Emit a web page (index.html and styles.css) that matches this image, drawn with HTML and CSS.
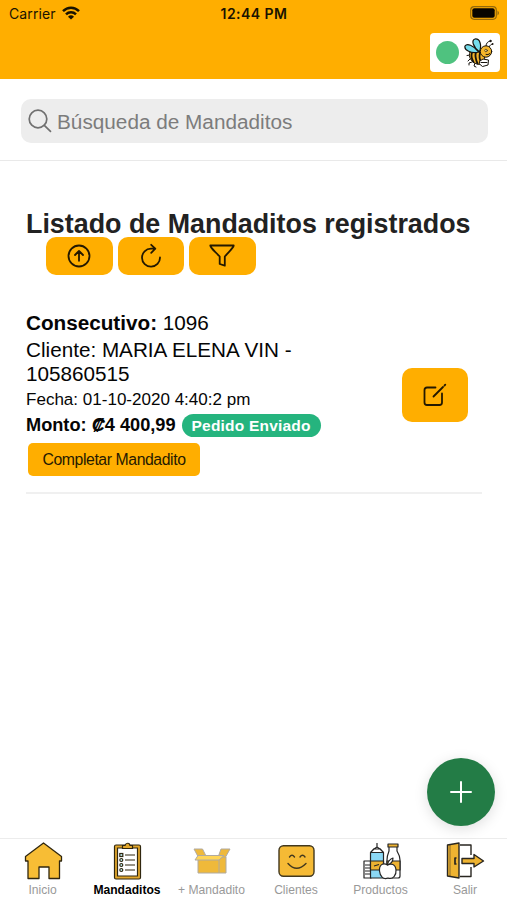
FILE: index.html
```html
<!DOCTYPE html>
<html lang="es">
<head>
<meta charset="utf-8">
<meta name="viewport" content="width=device-width, initial-scale=1">
<title>Mandaditos</title>
<link rel="stylesheet" href="styles.css">
</head>
<body>
<div class="app">
  <header class="header">
    <div class="status">
      <div class="carrier"><span>Carrier</span>
        <svg width="18" height="14" viewBox="0 0 18 14" fill="none" stroke="#1a1300" stroke-width="2.5"><path d="M1 5.2C5.600 .6 12.400 .6 17 5.200M4 8.400C6.800 5.600 11.200 5.600 14 8.400"/><path d="M6 10.700Q9 8 12 10.700L9 13.600Z" fill="#1a1300" stroke="none"/></svg>
      </div>
      <div class="clock">12:44 PM</div>
      <svg class="battery" width="30" height="14" viewBox="0 0 30 14"><rect x=".7" y=".7" width="25.600" height="12.600" rx="3.500" fill="none" stroke="#94690a" stroke-width="1.200"/><rect x="2.300" y="2.300" width="22.400" height="9.400" rx="2" fill="#080500"/><path d="M27.500 4.500Q30.500 7 27.500 9.500Z" fill="#94690a"/></svg>
    </div>
    <div class="toolbar">
      <div class="presence"><span class="dot"></span>
        <svg width="30" height="30" viewBox="0 0 30 30" stroke="#17130d" stroke-width="1" stroke-linecap="round">
          <path d="M6 17L3 17.500M6 21L4 23M8 24L5 25V27M11 25L10 28L12 29M22 8C22 5 24 3.500 26 3M25 9C26 7 27.500 6 28.500 6" fill="none"/>
          <path d="M6 14C4 19 7 24 13 26C19 28 22 22 20 16C17 12 11 11 6 14Z" fill="#f5b62b"/>
          <path d="M8 14.500Q6.500 19 9.500 24M12 14Q10.500 19 13.500 25.500M16 15Q14.500 20 17.500 25" fill="none" stroke-width="1.800"/>
          <path d="M15 14C7 16 0 12 1 8C3 5 9 7 15 14Z" fill="#75ddec" stroke-width="1.200"/>
          <path d="M15.500 14C9 9 7 2 11 1C16 .5 18 7 15.500 14Z" fill="#75ddec" stroke-width="1.200"/>
          <circle cx="22" cy="13.500" r="5.700" fill="#f5b62b"/>
          <circle cx="22" cy="12.500" r="1.300" fill="#fbdb80" stroke-width=".6"/><path d="M22 16.500Q24 17.500 26 15.500" fill="none"/>
          <path d="M16 23L19 21L24.500 22L24 27L18.500 28.500L15.500 26ZM17 24.500H23" fill="#fff"/>
          <circle cx="26.500" cy="3" r=".7"/><circle cx="28.500" cy="6" r=".4"/>
        </svg>
      </div>
    </div>
  </header>

  <div class="search-row">
    <div class="search">
      <svg width="24" height="24" viewBox="0 0 24 24" fill="none" stroke="#707070" stroke-width="1.700" stroke-linecap="round"><circle cx="10" cy="10" r="8.800"/><path d="M16.300 16.300L22.500 22.300"/></svg>
      <span>Búsqueda de Mandaditos</span>
    </div>
  </div>

  <main class="content">
    <h1>Listado de Mandaditos registrados</h1>
    <div class="actions">
      <button class="btn"><svg width="26" height="26" viewBox="0 0 26 26"><circle cx="13" cy="13" r="10.500"/><path d="M13 17.800V8.500M9 12L13 8L17 12"/></svg></button>
      <button class="btn"><svg width="26" height="26" viewBox="0 0 26 26"><path d="M22 14.500A9 9 0 1 1 13 5.700H17.300M13.200 1.800L17.300 5.700L13.200 9.800"/></svg></button>
      <button class="btn"><svg width="26" height="26" viewBox="0 0 26 26"><path d="M1.300 2.500H24.700C24.300 5 22 6.500 15.800 13.500V22.700L10.700 21V13.500C4 6.500 1.700 5 1.300 2.500Z"/></svg></button>
    </div>

    <article class="order">
      <div class="details">
        <div class="number"><b>Consecutivo:</b> 1096</div>
        <div class="client">Cliente: MARIA ELENA VIN - 105860515</div>
        <div class="date">Fecha: 01-10-2020 4:40:2 pm</div>
        <div class="amount"><b>Monto: <i>₡</i>4 400,99</b><span class="badge">Pedido Enviado</span></div>
        <button class="complete">Completar Mandadito</button>
      </div>
      <button class="btn edit"><svg width="26" height="26" viewBox="0 0 26 26"><path d="M13.500 5.500H5Q2.500 5.500 2.500 8V20.500Q2.500 23 5 23H17.500Q20 23 20 20.500V11.500M11.500 14.500L21 5M22.500 3.500L23.300 2.700"/></svg></button>
    </article>
  </main>

  <button class="fab"><svg width="22" height="22" viewBox="0 0 22 22" stroke="#fff" stroke-width="2" stroke-linecap="round"><path d="M11 1V21M1 11H21"/></svg></button>

  <nav class="tabs">
    <a class="tab"><svg width="44" height="40" viewBox="0 0 44 40" fill="#f7bd35" stroke="#30270f" stroke-width="1.300" stroke-linejoin="round"><path d="M22.500 2L40.500 15.500V20H38.500V37.500H28V26H18V37.500H7V20H4.500V15.500Z"/></svg><span>Inicio</span></a>
    <a class="tab active"><svg width="44" height="40" viewBox="0 0 44 40" fill="#e3a82d" stroke="#30270f" stroke-width="1.200"><rect x="9.500" y="4" width="26" height="34" rx="1.500"/><path d="M12.500 7H32.500V35H12.500Z" fill="#fff"/><path d="M17.500 7.500V4.500H20Q21 1.500 24 2.500L25 4.500H27.500V7.500Z"/><path d="M20 14H30M20 19H30M20 24H30M20 29H30" stroke-width="1.200"/><g fill="#bceaf1"><rect x="14.800" y="12.500" width="3" height="3"/><circle cx="16.300" cy="19" r="1.500"/><circle cx="16.300" cy="24" r="1.500"/><circle cx="16.300" cy="29" r="1.500"/></g></svg><span>Mandaditos</span></a>
    <a class="tab"><svg width="44" height="40" viewBox="0 0 44 40" fill="#efb93a" stroke="#b0aaa0" stroke-width="1"><path d="M8 15.500L4 8H12.500L16 15ZM28.500 15L31 8H40L35 17L31 15Z"/><path d="M8 16H36V32H8ZM29 16V32"/><path d="M8 14.500H34L29 19H5Z" fill="#ffd557"/></svg><span>+ Mandadito</span></a>
    <a class="tab"><svg width="44" height="40" viewBox="0 0 44 40" fill="none" stroke="#42381e" stroke-width="1.400" stroke-linecap="round"><rect x="5" y="4.800" width="35" height="30.500" rx="4.500" fill="#f5ba35"/><path d="M15.500 16Q18 12.500 20.500 16M26 16Q28.500 12.500 31 16M14 22.500Q22.500 32 32 22.500"/></svg><span>Clientes</span></a>
    <a class="tab"><svg width="44" height="40" viewBox="0 0 44 40" fill="#fff" stroke="#252525" stroke-width="1.200" stroke-linejoin="round"><path d="M5 20H12V37H5ZM6 24H12M6 27H12M6 30H12M6 33H12"/><path d="M11.500 12L15 8H21L24.500 12V37H11.500Z" fill="#8bd8f5"/><path d="M11.500 11.500L15 8H21L24.500 11.500ZM15 8L18 6L21 8M18 6V2"/><path d="M30 4H38V10Q41 15 41 19V35Q41 37 39 37H28V19Q28 15 30 10Z"/><path d="M29 3H39V6H29ZM28 20H41V29H28ZM11.500 20H24.500V29H11.500Z" fill="#eeb331"/><path d="M15 25L20 23.500" /><path d="M28.500 24C24 21 20 24 20.500 30C21 35 24 39 29 37C34 39 37.500 34 37 29C36.500 23 32 22 28.500 24Z"/><path d="M28.500 24Q29 19 34 17Q34 22 28.500 24Z"/></svg><span>Productos</span></a>
    <a class="tab"><svg width="44" height="40" viewBox="0 0 44 40" fill="#eeb331" stroke="#292620" stroke-width="1.400" stroke-linejoin="round"><path d="M17 4H28V14M28 26V35.500H17" fill="none"/><path d="M4.500 4L16 2V37L4.500 35Z"/><path d="M7 4V35" stroke-width=".5"/><path d="M13.500 17H12V23H13.500" fill="none" stroke-width="1.700"/><path d="M19 17.500H31V13.500L40.500 20L31 26V22.500H19Z"/></svg><span>Salir</span></a>
  </nav>
</div>
</body>
</html>
```
FILE: styles.css
```css
* { box-sizing: border-box; }
body { margin: 0; background: #fff; font-family: "Liberation Sans", Arial, sans-serif; color: #050505; }
.app { position: relative; height: 900px; display: flex; flex-direction: column; overflow: hidden; }
button { border: 0; margin: 0; padding: 0; font: inherit; color: inherit; background: #ffae00; }
svg { display: block; flex: none; }

.header { height: 79px; background: #ffae00; flex: none; }
.status { height: 26px; display: grid; grid-template-columns: 1fr auto 1fr; align-items: center; padding: 0 7px 0 9px; font-family: Inter, sans-serif; color: #1a1300; }
.carrier { display: flex; align-items: center; gap: 6px; font-size: 14px; letter-spacing: .1px; }
.clock { font-size: 14px; font-weight: 600; letter-spacing: .45px; margin-right: 1px; }
.battery { justify-self: end; }
.toolbar { display: flex; justify-content: flex-end; padding: 7px 7px 0 0; }
.presence { width: 70px; height: 39px; background: #fff; border-radius: 4px; display: flex; align-items: center; padding-left: 6px; gap: 5px; }
.dot { width: 23px; height: 23px; border-radius: 50%; background: #4fc27f; }

.search-row { height: 82px; flex: none; padding: 20px 19px 0 21px; border-bottom: 1px solid #e9e9e9; }
.search { height: 44px; border-radius: 10px; background: #ededed; color: #7c7c7c; font-size: 20.750px; display: flex; align-items: center; padding-left: 7px; gap: 5px; }
.search span { line-height: 24px; padding-top: 2px; }

.content { flex: 1; padding: 49.500px 25px 0 26px; }
h1 { margin: 0; font-size: 26.850px; line-height: 26px; font-weight: 700; color: #222; white-space: nowrap; }
.actions { display: flex; gap: 5px; padding-left: 20px; }
.btn { width: 66.500px; height: 38.500px; border-radius: 10px; display: grid; place-items: center; }
.btn svg { fill: none; stroke: #241900; stroke-width: 1.800; stroke-linecap: round; stroke-linejoin: round; }

.order { display: flex; justify-content: space-between; margin-top: 35px; height: 184px; border-bottom: 2px solid #f0f0f0; }
.details { width: 300px; }
.number, .client { font-size: 20.7px; line-height: 24.5px; }
.number { padding-top: 1px; }
.client { width: 290px; padding-top: 2px; }
.date { font-size: 17.050px; line-height: 26px; padding-top: .5px; }
.amount { display: flex; align-items: center; height: 25px; font-size: 18.200px; white-space: nowrap; }
.badge { flex: none; margin-left: 6px; width: 139px; height: 23px; border-radius: 12px; background: #25b47e; color: #fff; font-size: 15.5px; line-height: 23px; font-weight: 700; letter-spacing: .2px; text-align: center; }
.complete { display: block; width: 172px; height: 33px; margin: 5px 0 0 2px; border-radius: 5px; font-size: 15.8px; letter-spacing: -.42px; color: #261a00; }
.edit { height: 54px; margin: 58px 14px 0 0; }

.fab { position: absolute; right: 12.500px; top: 758px; width: 68px; height: 68px; border-radius: 50%; background: #237c46; display: grid; place-items: center; box-shadow: 0 3px 14px rgba(0, 0, 0, .13); }
.tabs { height: 62px; flex: none; display: grid; grid-template-columns: repeat(6, 1fr); border-top: 1px solid #ececec; padding-top: 2px; }
.tab { display: flex; flex-direction: column; align-items: center; padding-left: .5px; font-size: 12.1px; line-height: 18px; color: #999; white-space: nowrap; }
.active { color: #000; font-weight: 700; }
```
